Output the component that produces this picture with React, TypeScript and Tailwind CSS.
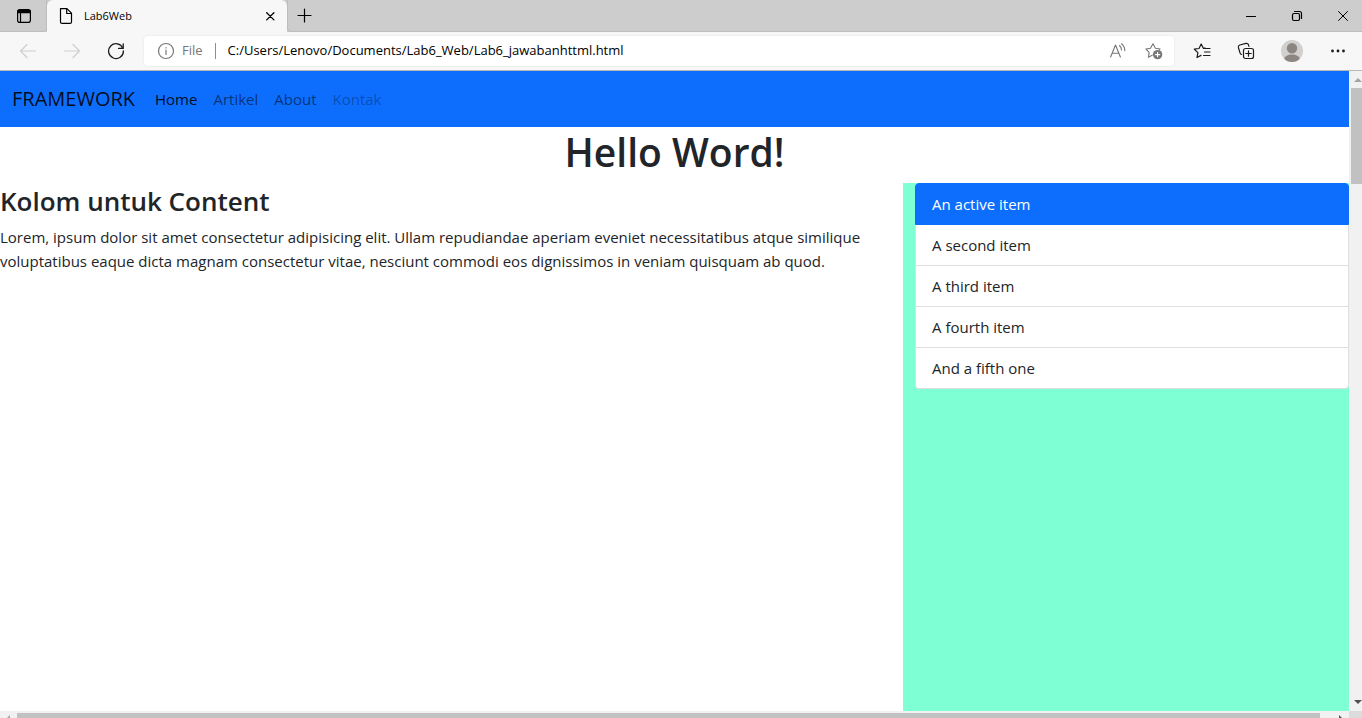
import React from "react";

type IconProps = { children: React.ReactNode; className?: string; size?: number };

function Icon({ children, className = "", size = 18 }: IconProps) {
  return (
    <svg
      width={size}
      height={size}
      viewBox={`0 0 ${size} ${size}`}
      fill="none"
      stroke="currentColor"
      strokeWidth="1.2"
      strokeLinecap="round"
      strokeLinejoin="round"
      aria-hidden="true"
      className={`shrink-0 ${className}`}
    >
      {children}
    </svg>
  );
}

function IconButton({ label, className = "", children }: { label: string; className?: string; children: React.ReactNode }) {
  return (
    <button type="button" aria-label={label} className={`flex shrink-0 items-center justify-center ${className}`}>
      {children}
    </button>
  );
}

function TabStrip() {
  return (
    <div className="flex h-8 shrink-0 items-stretch bg-[#cdcdcd] text-black">
      <div className="flex w-[47px] shrink-0 rounded-br-sm border-r border-b border-[#bdbdbd]">
        <IconButton label="Tab actions" className="w-full pl-[2px]">
          <Icon>
            <rect x="2.6" y="2.6" width="12.8" height="12.8" rx="2.2" />
            <path d="M3 3.6h12v2H3z" fill="currentColor" />
            <path d="M5.500 6v9" />
          </Icon>
        </IconButton>
      </div>
      <div className="flex w-60 shrink-0 items-center rounded-t-md bg-[#f7f7f7] pl-[10px]">
        <Icon>
          <path d="M3.5 1.6h6.4l4.6 4.6v8.700a1.500 1.500 0 0 1-1.500 1.500H5a1.500 1.500 0 0 1-1.500-1.500z" />
          <path d="M9.700 1.800v4.700h4.700" />
        </Icon>
        <span className="ml-[9px] flex-1 text-[11px]">Lab6Web</span>
        <IconButton label="Close tab" className="mr-2 size-[18px]">
          <Icon>
            <path d="M5.700 5.700l7.200 7.200M12.900 5.700l-7.200 7.200" strokeWidth="1.300" />
          </Icon>
        </IconButton>
      </div>
      <div className="flex flex-1 items-center justify-between rounded-bl-sm border-b border-l border-[#bdbdbd]">
        <IconButton label="New tab" className="ml-2">
          <Icon>
            <path d="M8.500 2v13M2 8.500h13" />
          </Icon>
        </IconButton>
        <div className="flex h-full">
          <IconButton label="Minimize" className="w-[46px]">
            <Icon>
              <path d="M4.500 9.500h9" />
            </Icon>
          </IconButton>
          <IconButton label="Restore" className="w-[46px]">
            <Icon>
              <rect x="4.500" y="6.500" width="7" height="7" rx="1.500" />
              <path d="M6.500 4.500h5a2 2 0 0 1 2 2v5" />
            </Icon>
          </IconButton>
          <IconButton label="Close" className="w-[42px] pl-1">
            <Icon>
              <path d="M4.500 4.500l9 9M13.500 4.500l-9 9" strokeWidth="1" />
            </Icon>
          </IconButton>
        </div>
      </div>
    </div>
  );
}

function Toolbar() {
  return (
    <div className="flex h-[39px] shrink-0 items-center border-b border-[#b9b9b9] bg-[#f7f7f7] pr-[2px] text-[#1b1b1b]">
      <div className="flex w-36 shrink-0 items-center pl-[6px]">
        <IconButton label="Back" className="w-11 text-[#cfcfcf]">
          <Icon>
            <path d="M16.500 9H1.500M8 2.500L1.500 9 8 15.500" />
          </Icon>
        </IconButton>
        <IconButton label="Forward" className="w-11 text-[#cfcfcf]">
          <Icon>
            <path d="M1.500 9h15M10 2.500L16.500 9 10 15.500" />
          </Icon>
        </IconButton>
        <IconButton label="Refresh" className="w-11">
          <Icon>
            <path d="M15.800 6.200A7.400 7.400 0 1 0 16.400 9" strokeWidth="1.300" />
            <path d="M16.200 1.800v4.600h-4.600" strokeWidth="1.300" />
          </Icon>
        </IconButton>
      </div>
      <div className="flex h-[30px] min-w-0 flex-1 items-center rounded-sm bg-white pl-[13px] pr-[2px] text-[13px] shadow-[0_0_3px_rgba(0,0,0,0.08)]">
        <Icon className="text-[#767676]">
          <circle cx="9" cy="9" r="7.500" />
          <path d="M9 8.200v4.300M9 5.700v.2" />
        </Icon>
        <span className="ml-[7px] text-[#767676]">File</span>
        <span className="mx-3 h-4 w-px bg-[#8d8d8d]" />
        <input
          aria-label="Address"
          className="min-w-0 flex-1 bg-transparent text-black outline-none"
          defaultValue="C:/Users/Lenovo/Documents/Lab6_Web/Lab6_jawabanhttml.html"
        />
        <IconButton label="Read aloud" className="w-9 text-[#767676]">
          <Icon>
            <path d="M1.600 15L6.500 3l4.900 12M3.200 11.200h6.600" strokeWidth="1.100" />
            <path d="M10.500 3.500q2 1.700 2 4.500M12.500 1.800q3.300 2.500 3.300 7" strokeWidth="1.100" />
          </Icon>
        </IconButton>
        <IconButton label="Add to favorites" className="w-9 text-[#767676]">
          <Icon>
            <path d="M7.200 13.200l-3.800 2 .8-4.800L.900 7l4.600-.7L8 1.800l2.400 4.500 4.700.7-.8.9" strokeWidth="1.100" />
            <circle cx="12.600" cy="12.600" r="4.700" fill="currentColor" stroke="none" />
            <path d="M12.600 10.400v4.400M10.400 12.600h4.400" stroke="white" strokeWidth="1.100" />
          </Icon>
        </IconButton>
      </div>
      <div className="ml-[6px] flex shrink-0 items-center">
        <IconButton label="Favorites" className="w-11">
          <Icon>
            <path d="M8 13.400l-4 2.100.9-4.900L1.300 7.200l4.700-.700L8.200 2l2 4.100h2" strokeWidth="1.200" />
            <path d="M10.500 6.500h6.500M11.500 10h5.500M10.500 13.500h6.500" strokeWidth="1.200" />
          </Icon>
        </IconButton>
        <IconButton label="Collections" className="w-11">
          <Icon>
            <rect x="6.500" y="6.500" width="10" height="10" rx="2" />
            <path d="M11.500 8.800v5.400M8.800 11.500h5.400" />
            <path d="M4.500 12.500Q3.300 12 3 10.800L1.400 5.500Q1 3.700 2.700 3L9 1.400q1.700-.4 2.400 1.200l.5 1.700" />
          </Icon>
        </IconButton>
        <IconButton label="Profile" className="w-12">
          <svg width="22" height="22" viewBox="0 0 22 22" aria-hidden="true">
            <clipPath id="avatar">
              <circle cx="11" cy="11" r="11" />
            </clipPath>
            <g clipPath="url(#avatar)">
              <rect width="22" height="22" fill="#d2d0ce" />
              <circle cx="11" cy="8.300" r="5.200" fill="#8b8682" />
              <ellipse cx="11" cy="19.500" rx="8" ry="5" fill="#8b8682" />
            </g>
          </svg>
        </IconButton>
        <IconButton label="Settings and more" className="w-11">
          <Icon>
            <g fill="currentColor" stroke="none">
              <circle cx="3.500" cy="9" r="1.400" />
              <circle cx="9" cy="9" r="1.400" />
              <circle cx="14.500" cy="9" r="1.400" />
            </g>
          </Icon>
        </IconButton>
      </div>
    </div>
  );
}

const links = [
  { text: "Home", color: "text-black/90" },
  { text: "Artikel", color: "text-black/55" },
  { text: "About", color: "text-black/55" },
  { text: "Kontak", color: "text-black/30" },
];

const items = ["An active item", "A second item", "A third item", "A fourth item", "And a fifth one"];

function Page() {
  return (
    <div className="flex min-w-0 flex-1 flex-col overflow-hidden bg-white text-[15px] leading-6 text-[#212529]">
      <nav className="flex h-14 shrink-0 items-center bg-[#0d6efd] px-3">
        <a href="#" className="mr-3 text-[20px] text-black/90">
          FRAMEWORK
        </a>
        {links.map((l) => (
          <a key={l.text} href="#" className={`px-2 py-2 ${l.color}`}>
            {l.text}
          </a>
        ))}
      </nav>
      <h1 className="mb-2 shrink-0 pt-px text-center text-[39px] leading-[47px] font-semibold">Hello Word!</h1>
      <div className="grid min-h-0 flex-1 grid-cols-[903fr_446fr]">
        <main>
          <h2 className="mb-[7px] pt-px text-[26px] leading-[34px] font-semibold">Kolom untuk Content</h2>
          <p className="pr-3">
            Lorem, ipsum dolor sit amet consectetur adipisicing elit. Ullam repudiandae aperiam eveniet necessitatibus
            atque similique voluptatibus eaque dicta magnam consectetur vitae, nesciunt commodi eos dignissimos in
            veniam quisquam ab quod.
          </p>
        </main>
        <aside className="bg-[#7fffd4] pl-3">
          <ul>
            {items.map((item, i) => (
              <li
                key={item}
                aria-current={i === 0 ? "true" : undefined}
                className={
                  i === 0
                    ? "rounded-t border border-[#0d6efd] bg-[#0d6efd] px-4 py-2 text-white"
                    : "border border-t-0 border-[#dfdfdf] bg-white px-4 py-2 last:rounded-b"
                }
              >
                {item}
              </li>
            ))}
          </ul>
        </aside>
      </div>
    </div>
  );
}

function VerticalScrollbar() {
  return (
    <div className="flex w-[13px] shrink-0 flex-col bg-[#f1f1f1]">
      <div className="flex h-[17px] shrink-0 items-center justify-end">
        <svg width="9" height="5" viewBox="0 0 9 5" aria-hidden="true">
          <path d="M1 5l4-4 4 4z" fill="#a3a3a3" />
        </svg>
      </div>
      <div className="ml-[2px] h-24 bg-[#c1c1c1]" />
      <div className="mt-auto flex h-[17px] shrink-0 items-center justify-end">
        <svg width="9" height="5" viewBox="0 0 9 5" aria-hidden="true">
          <path d="M1 0h8L5 4z" fill="#505050" />
        </svg>
      </div>
    </div>
  );
}

function HorizontalScrollbar() {
  return (
    <div className="flex h-[7px] shrink-0 bg-[#f1f1f1]">
      <svg width="17" height="7" viewBox="0 0 17 7" className="shrink-0" aria-hidden="true">
        <path d="M7 7l3-3v3z" fill="#a3a3a3" />
      </svg>
      <div className="mt-[2px] flex-1 bg-[#c1c1c1]" />
      <svg width="29" height="7" viewBox="0 0 29 7" className="shrink-0" aria-hidden="true">
        <path d="M19 4l3 3h-3z" fill="#505050" />
      </svg>
      <div className="w-[13px] shrink-0 bg-[#dcdcdc]" />
    </div>
  );
}

export default function App() {
  return (
    <div className="flex h-screen flex-col overflow-hidden font-['Open_Sans','Noto_Sans',sans-serif]">
      <TabStrip />
      <Toolbar />
      <div className="flex min-h-0 flex-1">
        <Page />
        <VerticalScrollbar />
      </div>
      <HorizontalScrollbar />
    </div>
  );
}
